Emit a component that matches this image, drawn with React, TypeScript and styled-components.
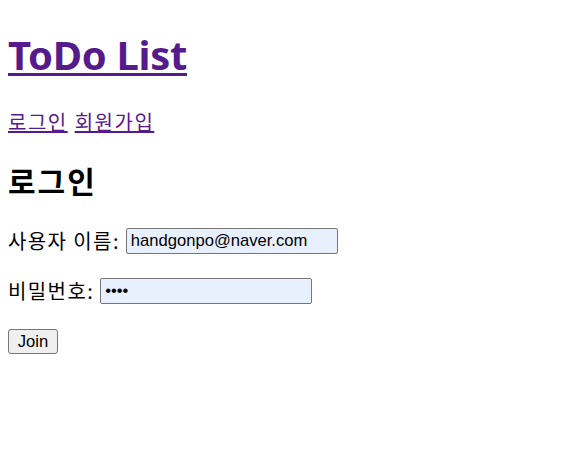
import React from "react";
import styled, { createGlobalStyle } from "styled-components";

const Global = createGlobalStyle`
  html, body { margin: 0; padding: 0; background: #ffffff; }
  body {
    font-family: "Noto Sans", "Noto Sans CJK KR", sans-serif;
    font-size: 20px;
    color: #000000;
  }
`;

const Page = styled.div`
  padding: 0 8px;
`;

const Title = styled.h1`
  margin: 28px 0 27px;
  font-size: 40px;
  line-height: 53px;
  font-weight: 700;
  letter-spacing: -0.3px;
`;

const TitleLink = styled.a`
  color: #551a8b;
  text-decoration: underline;
  text-underline-offset: 3px;
  text-decoration-thickness: 3px;
`;

const Nav = styled.nav`
  display: flex;
  gap: 7px;
  line-height: 27px;
  font-family: "Noto Sans CJK KR", sans-serif;
`;

const NavLink = styled.a`
  color: #551a8b;
  letter-spacing: 1.5px;
  text-decoration: underline;
  text-decoration-thickness: 2px;
`;

const Heading = styled.h2`
  margin: 25px 0 0;
  font-size: 30px;
  line-height: 40px;
  font-weight: 700;
  letter-spacing: 2px;
  font-family: "Noto Sans CJK KR", sans-serif;
`;

const Form = styled.form`
  display: flex;
  flex-direction: column;
  align-items: flex-start;
`;

const Field = styled.div<{ $top: number }>`
  display: flex;
  align-items: center;
  gap: 6px;
  height: 26px;
  margin-top: ${(p) => p.$top}px;
`;

const Label = styled.label`
  font-family: "Noto Sans CJK KR", sans-serif;
  font-size: 20px;
  line-height: 26px;
  letter-spacing: 1.4px;
`;

const Input = styled.input`
  box-sizing: border-box;
  width: 212px;
  height: 26px;
  padding: 1px 4px;
  border: 1px solid #767676;
  border-radius: 2px;
  background: #e8f0fe;
  font-family: "Liberation Sans", Arial, sans-serif;
  font-size: 16.6px;
  color: #000000;
  outline: none;
`;

const Button = styled.button`
  box-sizing: border-box;
  margin-top: 25px;
  width: 50px;
  height: 25px;
  padding: 0;
  border: 1px solid #767676;
  border-radius: 3px;
  background: #efefef;
  font-family: "Liberation Sans", Arial, sans-serif;
  font-size: 16.6px;
  color: #000000;
`;

export default function App() {
  return (
    <Page>
      <Global />
      <Title>
        <TitleLink href="#">ToDo List</TitleLink>
      </Title>
      <Nav>
        <NavLink href="#">로그인</NavLink>
        <NavLink href="#">회원가입</NavLink>
      </Nav>
      <Heading>로그인</Heading>
      <Form onSubmit={(e) => e.preventDefault()}>
        <Field $top={28}>
          <Label htmlFor="username">사용자 이름:</Label>
          <Input id="username" type="text" defaultValue="handgonpo@naver.com" />
        </Field>
        <Field $top={24}>
          <Label htmlFor="password">비밀번호:</Label>
          <Input id="password" type="password" defaultValue="1234" />
        </Field>
        <Button type="submit">Join</Button>
      </Form>
    </Page>
  );
}
